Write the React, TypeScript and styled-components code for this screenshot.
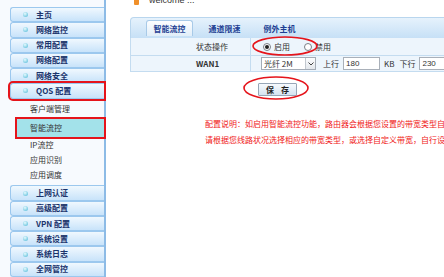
import React from "react";
import styled, { createGlobalStyle } from "styled-components";

const Global = createGlobalStyle`
  html, body { margin: 0; padding: 0; background: #fff; overflow: hidden; }
  body { font-family: "Noto Sans CJK SC", "Liberation Sans", sans-serif; font-size: 8px; color: #333; }
  * { box-sizing: border-box; }
`;

const Page = styled.div`
  position: relative;
  display: flex;
  width: 444px;
  height: 277px;
  overflow: hidden;
`;

const Sidebar = styled.nav`
  width: 106px;
  flex: none;
  padding-top: 7px;
  padding-left: 10px;
  border-right: 2px solid #8dbbe6;
  background: #f7fafe;
  display: flex;
  flex-direction: column;
`;

const MenuItem = styled.div<{ $marked?: boolean }>`
  position: relative;
  height: 15.3px;
  display: flex;
  align-items: center;
  padding-left: 12px;
  gap: 8px;
  border: 1px solid #9cc8ee;
  border-right: none;
  border-radius: 3px 0 0 3px;
  background: linear-gradient(#f0f8fe, #c8e3fa);
  font-weight: 700;
  color: #1b346c;
  line-height: 1;
  ${(p) => (p.$marked ? "outline: 2px solid #e5141b; outline-offset: 0px;" : "")}
`;

const Bullet = styled.span`
  width: 5px;
  height: 5px;
  border-radius: 50%;
  background: radial-gradient(circle at 40% 35%, #e8fbff, #49b6d6);
  flex: none;
`;

const SubMenu = styled.div`
  display: flex;
  flex-direction: column;
  padding-top: 3px;
  height: 87px;
`;

const SubItem = styled.div<{ $active?: boolean }>`
  height: ${(p) => (p.$active ? "18px" : "15px")};
  display: flex;
  align-items: center;
  padding-left: ${(p) => (p.$active ? "13px" : "20px")};
  margin-left: ${(p) => (p.$active ? "7px" : "0")};
  margin-top: ${(p) => (p.$active ? "2px" : "0")};
  margin-bottom: ${(p) => (p.$active ? "1px" : "0")};
  color: #333;
  line-height: 1;
  ${(p) =>
    p.$active
      ? "background: #a3e2ea; outline: 2px solid #e5141b; outline-offset: 0px;"
      : ""}
`;

const Main = styled.main`
  flex: 1;
  padding-left: 24px;
  display: flex;
  flex-direction: column;
  min-width: 0;
`;

const Welcome = styled.div`
  height: 10px;
  margin-top: -5px;
  padding-left: 4px;
  display: flex;
  align-items: center;
  gap: 10px;
  font-family: "Liberation Sans", sans-serif;
  font-size: 9px;
  color: #333;
`;

const WelcomeIcon = styled.span`
  width: 5px;
  height: 9px;
  background: #f0902a;
  border-radius: 1px;
`;

const Panel = styled.section`
  margin-top: 12px;
  width: 330px;
`;

const TabBar = styled.div`
  height: 21px;
  display: flex;
  align-items: flex-end;
  gap: 8px;
  padding-left: 15px;
  border: 1px solid #b9d6ee;
  border-bottom: none;
  border-radius: 4px 0 0 0;
  background: linear-gradient(#e6f2fc, #c6e0f6);
`;

const Tab = styled.div<{ $active?: boolean }>`
  width: 47px;
  height: 16px;
  margin-bottom: 2px;
  display: flex;
  align-items: center;
  justify-content: center;
  font-weight: 700;
  color: #1d3f93;
  border-radius: 3px 3px 0 0;
  ${(p) =>
    p.$active
      ? "background: linear-gradient(#fdfeff, #e1eef9); border: 1px solid #a8cae8; border-bottom: none;"
      : ""}
`;

const Table = styled.div`
  display: grid;
  grid-template-columns: 120px 1fr;
  border-left: 1px solid #c4dcf0;
  background: #edf5fc;
`;

const Label = styled.div<{ $h: number; $bold?: boolean }>`
  height: ${(p) => p.$h}px;
  display: flex;
  align-items: center;
  padding-left: 65px;
  border-right: 1px solid #c4dcf0;
  border-bottom: 1px solid #c4dcf0;
  font-weight: ${(p) => (p.$bold ? 700 : 400)};
  color: #333;
`;

const Value = styled.div<{ $h: number }>`
  height: ${(p) => p.$h}px;
  display: flex;
  align-items: center;
  padding-left: 10px;
  border-bottom: 1px solid #c4dcf0;
  white-space: nowrap;
  color: #333;
`;

const Radio = styled.span<{ $checked?: boolean }>`
  width: 8px;
  height: 8px;
  margin-left: 2px;
  margin-right: 3px;
  border-radius: 50%;
  border: 1px solid #7b7f86;
  background: #fff;
  display: inline-flex;
  align-items: center;
  justify-content: center;
  &::after {
    content: "";
    width: 4px;
    height: 4px;
    border-radius: 50%;
    background: ${(p) => (p.$checked ? "#222" : "transparent")};
  }
`;

const RadioText = styled.span`
  margin-right: 12px;
`;

const Select = styled.div`
  width: 55px;
  height: 13px;
  border: 1px solid #a4acb6;
  background: #fff;
  display: flex;
  align-items: center;
  padding-left: 2px;
  justify-content: space-between;
`;

const SelectArrow = styled.span`
  width: 10px;
  height: 11px;
  border-left: 1px solid #c2c8cf;
  background: linear-gradient(#fbfcfd, #e3e7ec);
  display: flex;
  align-items: center;
  justify-content: center;
`;

const FieldLabel = styled.span<{ $ml: number }>`
  margin-left: ${(p) => p.$ml}px;
`;

const Input = styled.div<{ $w: number }>`
  width: ${(p) => p.$w}px;
  height: 13px;
  margin-left: 4px;
  border: 1px solid #a9b0b9;
  background: #fff;
  display: flex;
  align-items: center;
  padding-left: 2px;
  font-family: "Liberation Sans", sans-serif;
  font-size: 8px;
`;

const ButtonRow = styled.div`
  padding-left: 128px;
  margin-top: 11px;
`;

const Button = styled.button`
  width: 39px;
  height: 13px;
  padding: 0;
  border: 1px solid #97a6b7;
  border-radius: 1px;
  background: linear-gradient(#f7fafd, #d5e4f2);
  display: inline-flex;
  align-items: center;
  justify-content: center;
  gap: 7px;
  font-family: "Noto Sans CJK SC", sans-serif;
  font-size: 8px;
  font-weight: 700;
  color: #222;
  line-height: 1;
`;

const Notes = styled.div`
  margin-top: 20px;
  padding-left: 75px;
  color: #f01820;
  line-height: 16px;
  white-space: nowrap;
`;

const Overlay = styled.svg`
  position: absolute;
  left: 0;
  top: 0;
  pointer-events: none;
`;

const topMenu = ["主页", "网络监控", "常用配置", "网络配置", "网络安全"];
const subMenu = ["客户端管理", "智能流控", "IP流控", "应用识别", "应用调度"];
const bottomMenu = ["上网认证", "高级配置", "VPN 配置", "系统设置", "系统日志", "全网管控"];

export default function App() {
  return (
    <Page>
      <Global />
      <Sidebar>
        {topMenu.map((m) => (
          <MenuItem key={m}>
            <Bullet />
            {m}
          </MenuItem>
        ))}
        <MenuItem $marked>
          <Bullet />
          QOS 配置
        </MenuItem>
        <SubMenu>
          {subMenu.map((s) => (
            <SubItem key={s} $active={s === "智能流控"}>
              {s}
            </SubItem>
          ))}
        </SubMenu>
        {bottomMenu.map((m) => (
          <MenuItem key={m}>
            <Bullet />
            {m}
          </MenuItem>
        ))}
      </Sidebar>
      <Main>
        <Welcome>
          <WelcomeIcon />
          welcome ...
        </Welcome>
        <Panel>
          <TabBar>
            <Tab $active>智能流控</Tab>
            <Tab>通道限速</Tab>
            <Tab>例外主机</Tab>
          </TabBar>
          <Table>
            <Label $h={18}>状态操作</Label>
            <Value $h={18}>
              <Radio $checked />
              <RadioText>启用</RadioText>
              <Radio />
              <RadioText>禁用</RadioText>
            </Value>
            <Label $h={16} $bold>
              WAN1
            </Label>
            <Value $h={16}>
              <Select>
                光纤 2M
                <SelectArrow>
                  <svg width="6" height="4" viewBox="0 0 6 4">
                    <path d="M0.5 0.5 L3 3 L5.5 0.5" fill="none" stroke="#444" strokeWidth="1" />
                  </svg>
                </SelectArrow>
              </Select>
              <FieldLabel $ml={7}>上行</FieldLabel>
              <Input $w={37}>180</Input>
              <FieldLabel $ml={4}>KB</FieldLabel>
              <FieldLabel $ml={5}>下行</FieldLabel>
              <Input $w={40}>230</Input>
            </Value>
          </Table>
          <ButtonRow>
            <Button>
              <span>保</span>
              <span>存</span>
            </Button>
          </ButtonRow>
          <Notes>
            <div>配置说明：如启用智能流控功能，路由器会根据您设置的带宽类型自动分配带宽</div>
            <div>请根据您线路状况选择相应的带宽类型，或选择自定义带宽，自行设置带宽</div>
          </Notes>
        </Panel>
      </Main>
      <Overlay width="444" height="277" viewBox="0 0 444 277">
        <ellipse cx="285" cy="46" rx="32" ry="9" fill="none" stroke="#e5141b" strokeWidth="1.6" />
        <ellipse cx="276" cy="88" rx="32" ry="11" fill="none" stroke="#e5141b" strokeWidth="1.6" />
      </Overlay>
    </Page>
  );
}
